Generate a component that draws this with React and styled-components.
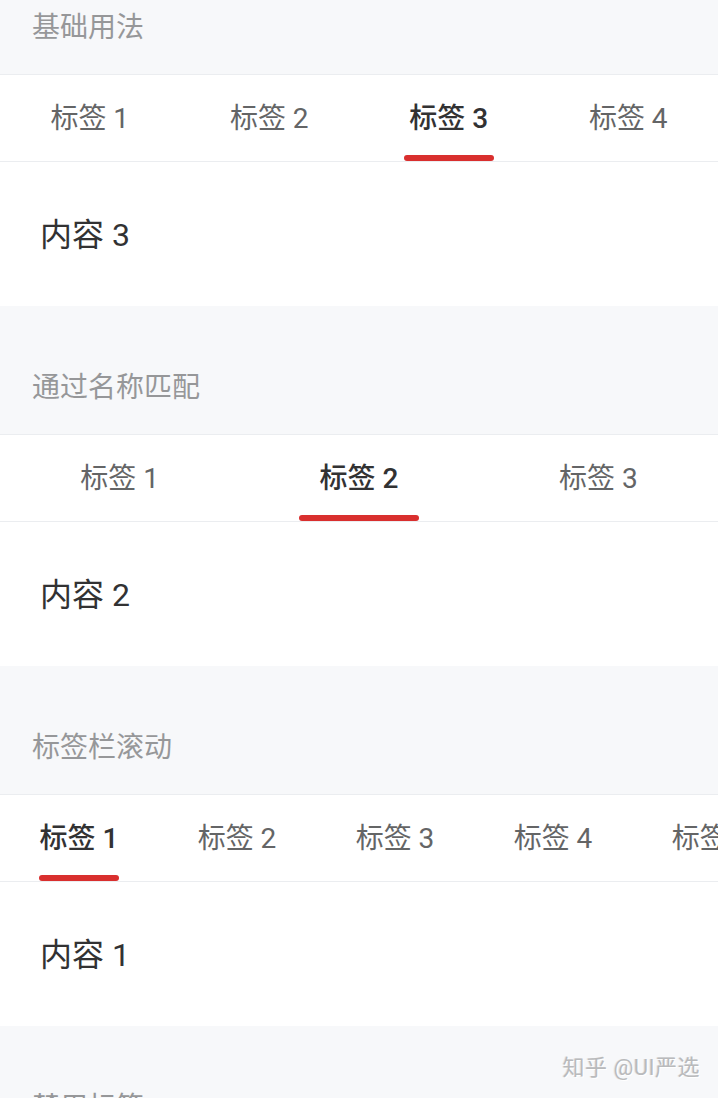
import React from "react";
import styled, { createGlobalStyle } from "styled-components";

const GlobalStyle = createGlobalStyle`
  html, body {
    margin: 0;
    padding: 0;
    background: #f7f8fa;
    overflow: hidden;
  }
  body {
    font-family: Roboto, "Noto Sans CJK SC", sans-serif;
    -webkit-font-smoothing: antialiased;
  }
`;

const Page = styled.div`
  position: relative;
  width: 718px;
  height: 1098px;
  overflow: hidden;
  background: #f7f8fa;
`;

const Scroller = styled.div`
  margin-top: -54px;
  display: flex;
  flex-direction: column;
`;

const Section = styled.section`
  display: flex;
  flex-direction: column;
`;

const Title = styled.h2`
  margin: 0;
  padding: 66px 32px 30px;
  font-size: 28px;
  line-height: 32px;
  font-weight: 400;
  color: #969799;
`;

const TabBar = styled.div`
  position: relative;
  display: flex;
  height: 88px;
  box-sizing: border-box;
  background: #fff;
  border-top: 1px solid #ebedf0;
  border-bottom: 1px solid #ebedf0;
  overflow: hidden;
`;

const Tab = styled.div`
  position: relative;
  flex: ${(p) => (p.$scroll ? "0 0 158px" : "1 1 0")};
  display: flex;
  align-items: center;
  justify-content: center;
  padding-top: 2px;
  box-sizing: border-box;
  font-size: 28px;
  line-height: 40px;
  color: ${(p) => (p.$active ? "#323233" : "#646566")};
  font-weight: ${(p) => (p.$active ? 500 : 400)};
  white-space: nowrap;
`;

const Line = styled.span`
  position: absolute;
  left: 50%;
  bottom: 0;
  width: ${(p) => p.$w}px;
  height: 6px;
  margin-left: ${(p) => -p.$w / 2}px;
  border-radius: 3px;
  background: #d92f2e;
`;

const Content = styled.div`
  padding: 49px 40px 47px;
  background: #fff;
  font-size: 32px;
  line-height: 48px;
  color: #323233;
`;

const Watermark = styled.div`
  position: absolute;
  right: 18px;
  top: 1052px;
  font-size: 22px;
  line-height: 32px;
  color: #b9babc;
  text-shadow: 1px 1px 0 #fff, -1px 0 0 #e6e6e6;
  letter-spacing: 0.5px;
`;

function Tabs({ count, active, lineWidth, scroll }) {
  return (
    <TabBar>
      {Array.from({ length: count }, (_, i) => (
        <Tab key={i} $active={i === active} $scroll={scroll}>
          标签 {i + 1}
          {i === active && <Line $w={lineWidth} />}
        </Tab>
      ))}
    </TabBar>
  );
}

const sections = [
  { title: "基础用法", count: 4, active: 2, w: 90 },
  { title: "通过名称匹配", count: 3, active: 1, w: 120 },
  { title: "标签栏滚动", count: 8, active: 0, w: 80, scroll: true },
];

export default function App() {
  return (
    <Page>
      <GlobalStyle />
      <Scroller>
        {sections.map((s) => (
          <Section key={s.title}>
            <Title>{s.title}</Title>
            <Tabs count={s.count} active={s.active} lineWidth={s.w} scroll={s.scroll} />
            <Content>内容 {s.active + 1}</Content>
          </Section>
        ))}
        <Section>
          <Title>禁用标签</Title>
        </Section>
      </Scroller>
      <Watermark>知乎 @UI严选</Watermark>
    </Page>
  );
}
